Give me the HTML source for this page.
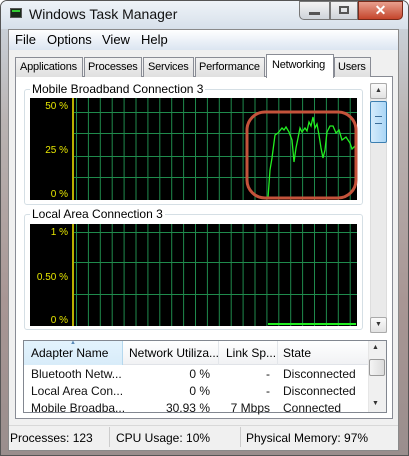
<!DOCTYPE html>
<html><head><meta charset="utf-8"><style>
*{margin:0;padding:0;box-sizing:border-box}
body{width:409px;height:456px;overflow:hidden;background:#fff;font-family:"Liberation Sans",sans-serif;font-size:12px;color:#000;position:relative}
.abs{position:absolute}
.tab{font-size:11px;letter-spacing:-0.2px}
</style></head><body>
<div class="abs" style="left:0;top:0;width:409px;height:456px;background:linear-gradient(#dfe6ee,#c9cfd6 30px,#b9b3b2 120px,#a89694 300px,#9a8e8d);border:1px solid #555;border-radius:7px 7px 0 0"></div>
<div class="abs" style="left:1px;top:1px;width:407px;height:28px;background:linear-gradient(#eef3f8,#d7e0ea);border-radius:6px 6px 0 0"></div>
<div class="abs" style="left:10px;top:8px;width:12px;height:10px;background:#1a2a1a;border:1px solid #555"></div>
<div class="abs" style="left:12px;top:10px;width:8px;height:5px;border-top:2px solid #3c3;"></div>
<div class="abs" style="left:29px;top:6px;font-size:14px;color:#111">Windows Task Manager</div>
<div class="abs" style="left:299px;top:1px;width:31px;height:19px;background:linear-gradient(#f3f3f3,#cfd4da);border:1px solid #777;border-radius:0 0 0 5px"></div>
<div class="abs" style="left:309px;top:12px;width:11px;height:3px;background:#555"></div>
<div class="abs" style="left:330px;top:1px;width:28px;height:19px;background:linear-gradient(#f3f3f3,#cfd4da);border:1px solid #777"></div>
<div class="abs" style="left:339px;top:6px;width:10px;height:8px;border:2px solid #555"></div>
<div class="abs" style="left:358px;top:1px;width:45px;height:19px;background:linear-gradient(#e8a08e,#c5452c);border:1px solid #7a2a1a;border-radius:0 0 5px 0;color:#fff;font-weight:bold;font-size:14px;text-align:center;line-height:17px">✕</div>
<div class="abs" style="left:8px;top:29px;width:391px;height:422px;background:#f0f0f0;border:1px solid #8a8a8a"></div>
<div class="abs" style="left:9px;top:30px;width:389px;height:20px;background:linear-gradient(#fff,#dbe5f1)"></div>
<div class="abs" style="left:15px;top:32px;font-size:13px">File</div>
<div class="abs" style="left:47px;top:32px;font-size:13px">Options</div>
<div class="abs" style="left:102px;top:32px;font-size:13px">View</div>
<div class="abs" style="left:141px;top:32px;font-size:13px">Help</div>
<div class="abs" style="left:15px;top:76px;width:378px;height:343px;background:#fff;border:1px solid #898c95"></div>
<div class="abs tab" style="left:15px;top:57px;height:20px;width:68px;background:linear-gradient(#f2f2f2,#e0e0e0);border:1px solid #898c95;border-bottom:none;padding:3px 0 0 4px">Applications</div>
<div class="abs tab" style="left:84px;top:57px;height:20px;width:58px;background:linear-gradient(#f2f2f2,#e0e0e0);border:1px solid #898c95;border-bottom:none;padding:3px 0 0 3px">Processes</div>
<div class="abs tab" style="left:143px;top:57px;height:20px;width:51px;background:linear-gradient(#f2f2f2,#e0e0e0);border:1px solid #898c95;border-bottom:none;padding:3px 0 0 4px">Services</div>
<div class="abs tab" style="left:195px;top:57px;height:20px;width:70px;background:linear-gradient(#f2f2f2,#e0e0e0);border:1px solid #898c95;border-bottom:none;padding:3px 0 0 3px">Performance</div>
<div class="abs tab" style="left:266px;top:54px;height:24px;width:68px;background:#fff;border:1px solid #898c95;border-bottom:none;padding:4px 0 0 5px">Networking</div>
<div class="abs tab" style="left:334px;top:57px;height:20px;width:37px;background:linear-gradient(#f2f2f2,#e0e0e0);border:1px solid #898c95;border-bottom:none;padding:3px 0 0 3px">Users</div>
<div class="abs" style="left:24px;top:89px;width:339px;height:116px;border:1px solid #d5dfe5;border-radius:3px"></div>
<div class="abs" style="left:30px;top:82px;background:#fff;padding:0 2px">Mobile Broadband Connection 3</div>
<div class="abs" style="left:24px;top:214px;width:339px;height:116px;border:1px solid #d5dfe5;border-radius:3px"></div>
<div class="abs" style="left:30px;top:207px;background:#fff;padding:0 2px">Local Area Connection 3</div>
<svg class="abs" style="left:0;top:0" width="409" height="456">
<defs>
<pattern id="v" x="76" y="0" width="11.9" height="456" patternUnits="userSpaceOnUse"><rect x="0" y="0" width="1" height="456" fill="#1f8a4c"/></pattern>
</defs>
<rect x="30" y="98" width="327" height="102" fill="#000"/>
<rect x="73" y="98" width="284" height="102" fill="url(#v)"/>
<g fill="#1f8a4c"><rect x="73" y="112" width="284" height="1"/><rect x="73" y="133" width="284" height="1"/><rect x="73" y="156" width="284" height="1"/><rect x="73" y="177" width="284" height="1"/></g>
<rect x="72" y="98" width="2" height="102" fill="#b8b000"/>
<g fill="#e6e600" font-size="10" font-family="Liberation Sans" text-anchor="end"><text x="68" y="109">50 %</text><text x="68" y="153">25 %</text><text x="68" y="197">0 %</text></g>
<polyline fill="none" stroke="#22ee22" stroke-width="1.3" points="268,198 270,170 272,158 275,135 278,133 282,128 284,130 286,127 289,132 292,140 294,162 296,148 298,138 300,128 302,132 305,128 307,131 309,122 311,126 313,117 315,128 317,124 319,135 321,148 323,158 325,150 327,132 330,126 333,126 336,133 339,130 342,140 346,137 350,143 352,149 355,146"/>
<rect x="247" y="112" width="109" height="86" rx="18" fill="none" stroke="#c4533b" stroke-width="3"/>
<rect x="30" y="224" width="327" height="102" fill="#000"/>
<rect x="73" y="224" width="284" height="102" fill="url(#v)"/>
<g fill="#1f8a4c"><rect x="73" y="232" width="284" height="1"/><rect x="73" y="262" width="284" height="1"/><rect x="73" y="294" width="284" height="1"/></g>
<rect x="268" y="323" width="88" height="2" fill="#22ee22"/>
<rect x="72" y="224" width="2" height="102" fill="#b8b000"/>
<g fill="#e6e600" font-size="10" font-family="Liberation Sans" text-anchor="end"><text x="68" y="235">1 %</text><text x="68" y="280">0.50 %</text><text x="68" y="323">0 %</text></g>
</svg>
<div class="abs" style="left:370px;top:83px;width:17px;height:250px;background:#eaeaea;border:1px solid #ddd"></div>
<div class="abs" style="left:370px;top:83px;width:17px;height:16px;background:linear-gradient(#fafafa,#e2e2e2);border:1px solid #aaa;border-radius:2px;font-size:7px;text-align:center;line-height:14px;color:#333">▲</div>
<div class="abs" style="left:370px;top:101px;width:17px;height:42px;background:linear-gradient(90deg,#d5ebfb,#aad6f6);border:1px solid #3c7fb1;border-radius:2px"></div>
<div class="abs" style="left:375px;top:116px;width:7px;height:8px;border-top:1px solid #3c6e9a;border-bottom:1px solid #3c6e9a"></div>
<div class="abs" style="left:370px;top:317px;width:17px;height:16px;background:linear-gradient(#fafafa,#e2e2e2);border:1px solid #aaa;border-radius:2px;font-size:7px;text-align:center;line-height:14px;color:#333">▼</div>
<div class="abs" style="left:23px;top:340px;width:364px;height:73px;background:#fff;border:1px solid #828790"></div>
<div class="abs" style="left:24px;top:341px;width:344px;height:24px;background:linear-gradient(#fff,#f1f2f4);border-bottom:1px solid #e0e3e8"></div>
<div class="abs" style="left:24px;top:341px;width:99px;height:24px;background:linear-gradient(#e3f3fd,#d8ecf9);border-right:1px solid #b5d8ee"></div>
<div class="abs" style="left:218px;top:341px;width:1px;height:24px;background:#e3e6ea"></div>
<div class="abs" style="left:277px;top:341px;width:1px;height:24px;background:#e3e6ea"></div>
<div class="abs" style="left:70px;top:340px;font-size:6px;color:#5a8ab8">▲</div>
<div class="abs" style="left:31px;top:346px">Adapter Name</div>
<div class="abs" style="left:129px;top:346px">Network Utiliza...</div>
<div class="abs" style="left:226px;top:346px">Link Sp...</div>
<div class="abs" style="left:283px;top:346px">State</div>
<div class="abs" style="left:31px;top:366px;line-height:17px;color:#111">Bluetooth Netw...<br>Local Area Con...<br>Mobile Broadba...</div>
<div class="abs" style="left:130px;top:366px;width:80px;text-align:right;line-height:17px;color:#111">0 %<br>0 %<br>30.93 %</div>
<div class="abs" style="left:220px;top:366px;width:50px;text-align:right;line-height:17px;color:#111">-<br>-<br>7 Mbps</div>
<div class="abs" style="left:283px;top:366px;line-height:17px;color:#111">Disconnected<br>Disconnected<br>Connected</div>
<div class="abs" style="left:368px;top:341px;width:18px;height:71px;background:#f0f0f0;border-left:1px solid #e6e6e6"></div>
<div class="abs" style="left:372px;top:344px;font-size:7px;color:#333">▲</div>
<div class="abs" style="left:369px;top:359px;width:16px;height:17px;background:linear-gradient(90deg,#f4f4f4,#dcdcdc);border:1px solid #999;border-radius:2px"></div>
<div class="abs" style="left:372px;top:400px;font-size:7px;color:#333">▼</div>
<div class="abs" style="left:9px;top:425px;width:389px;height:25px;background:#f0f0f0;border-top:1px solid #d8d8d8"></div>
<div class="abs" style="left:109px;top:427px;width:1px;height:20px;background:#ccc"></div>
<div class="abs" style="left:240px;top:427px;width:1px;height:20px;background:#ccc"></div>
<div class="abs" style="left:10px;top:431px;font-size:12px">Processes: 123</div>
<div class="abs" style="left:116px;top:431px;font-size:12px">CPU Usage: 10%</div>
<div class="abs" style="left:246px;top:431px;font-size:12px">Physical Memory: 97%</div>
</body></html>
